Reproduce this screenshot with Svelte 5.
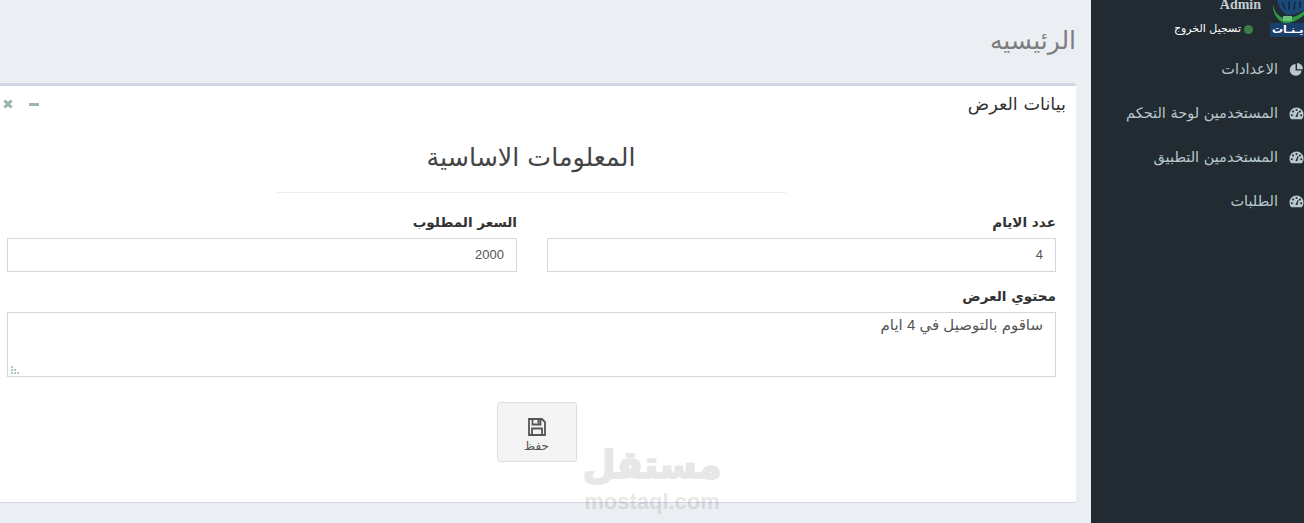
<script>
	const menu = [
		{ label: 'الاعدادات', icon: 'pie' },
		{ label: 'المستخدمين لوحة التحكم', icon: 'gauge' },
		{ label: 'المستخدمين التطبيق', icon: 'gauge' },
		{ label: 'الطلبات', icon: 'gauge' }
	];
</script>

<div class="wrapper" dir="rtl">
	<aside class="sidebar">
		<div class="profile">
			<div class="logo">
				<svg class="emblem" viewBox="0 0 34 24" width="34" height="24">
					<path d="M7 0H34V10C28 14 22 15 17 15 12 13 9 7 7 0z" fill="#1c4a78" />
					<path d="M12 2l3 7M19 1v9M25 2l-1 8M30 1v7" stroke="#13263a" stroke-width="1.500" />
					<path d="M3 4C4 12 9 17 14 18 20 19 28 16 34 11V15C28 20 21 24 14 23 8 21 2 13 3 4z" fill="#2f9a45" />
					<path d="M13 16h9v5h-9z" fill="#6fbf7c" />
				</svg>
				<span class="logo-text">ديـنـات</span>
			</div>
			<div class="user">
				<strong class="name" dir="ltr">Admin</strong>
				<span class="logout"><i class="dot"></i>تسجيل الخروج</span>
			</div>
		</div>
		<nav class="menu">
			{#each menu as item}
				<a class="menu-item" href="#top">
					<svg viewBox="0 0 16 16" width="15" height="15">
						{#if item.icon === 'pie'}
							<path d="M7 2.200A6.300 6.300 0 1 0 13.400 9H7z" fill="#b8c7ce" />
							<path d="M8.500 1.200A6.300 6.300 0 0 1 14.900 7.600H8.500z" fill="#b8c7ce" />
						{:else}
							<path d="M8 1.500a7.500 7.500 0 0 0-7.500 7.500c0 2 .7 3.800 1.800 5.200h11.400c1.100-1.400 1.800-3.200 1.800-5.200A7.500 7.500 0 0 0 8 1.500z" fill="#b8c7ce" />
							<circle cx="8" cy="4.200" r="1.100" fill="#212b31" />
							<circle cx="4.300" cy="5.800" r="1.100" fill="#212b31" />
							<circle cx="11.700" cy="5.800" r="1.100" fill="#212b31" />
							<circle cx="3" cy="9.800" r="1.100" fill="#212b31" />
							<circle cx="13" cy="9.800" r="1.100" fill="#212b31" />
							<path d="M6.800 11.500l2.700-5.500.9.300-1.600 5.700z" fill="#212b31" />
						{/if}
					</svg>
					<span>{item.label}</span>
				</a>
			{/each}
		</nav>
	</aside>

	<main class="content">
		<h3 class="page-title">الرئيسيه</h3>
		<section class="panel">
			<header class="panel-head">
				<h4>بيانات العرض</h4>
				<div class="tools">
					<span class="tool-min"></span>
					<svg viewBox="0 0 10 10" width="10" height="10">
						<path d="M1.500 1.500l7 7M8.500 1.500l-7 7" stroke="#9db3b5" stroke-width="3" />
					</svg>
				</div>
			</header>
			<h2 class="form-title">المعلومات الاساسية</h2>
			<hr />
			<form class="form">
				<div class="row">
					<label class="field">
						<span>عدد الايام</span>
						<input type="text" value="4" />
					</label>
					<label class="field">
						<span>السعر المطلوب</span>
						<input type="text" value="2000" />
					</label>
				</div>
				<label class="field full">
					<span>محتوي العرض</span>
					<div class="area">
						<textarea>ساقوم بالتوصيل في 4 ايام</textarea>
						<svg class="grip" viewBox="0 0 8 8" width="8" height="8">
							<path d="M0 0h2v2H0zM0 3h2v2H0zM3 3h2v2H3zM0 6h2v2H0zM3 6h2v2H3zM6 6h2v2H6z" fill="#b4c6c8" />
						</svg>
					</div>
				</label>
				<div class="actions">
					<button type="button" class="save">
						<svg viewBox="0 0 18 18" width="18" height="18">
							<path d="M1 1h13l3 3v13H1z M4.500 1v5.500h8V1 M4 17v-6.500h10V17" fill="none" stroke="#555" stroke-width="1.800" />
							<path d="M9.500 2h2v3.500h-2z" fill="#555" />
						</svg>
						<span>حفظ</span>
					</button>
				</div>
			</form>
		</section>
	</main>

	<div class="watermark" dir="rtl">
		<span class="wm-ar">مستقل</span>
		<span class="wm-en" dir="ltr">mostaql.com</span>
	</div>
</div>

<style>
	:global(body) {
		margin: 0;
		background: #ebeff3;
	}

	.wrapper {
		display: flex;
		position: relative;
		height: 523px;
		overflow: hidden;
		font-family: 'DejaVu Sans', sans-serif;
		background: #ebeff3;
	}

	.sidebar {
		flex: 0 0 213px;
		background: #212b31;
		color: #b8c7ce;
	}

	.profile {
		display: flex;
		align-items: flex-start;
		height: 50px;
		margin-top: -3px;
	}

	.logo {
		position: relative;
		width: 34px;
		height: 41px;
		overflow: hidden;
		flex: none;
		direction: ltr;
		margin-top: 3px;
	}

	.emblem {
		display: block;
	}

	.logo-text {
		position: absolute;
		left: 0;
		top: 23px;
		height: 14px;
		padding: 0 4px 0 2px;
		background: #1a3f6b;
		color: #fff;
		font-size: 11px;
		font-weight: bold;
		line-height: 14px;
		white-space: nowrap;
		direction: rtl;
	}

	.user {
		display: flex;
		flex-direction: column;
		align-items: flex-start;
		margin-right: 17px;
	}

	.name {
		margin-right: -8px;
		font-family: 'Liberation Serif', serif;
		font-size: 14px;
		line-height: 15px;
		color: #c2ced4;
	}

	.logout {
		display: flex;
		align-items: center;
		gap: 3px;
		margin-top: 9px;
		font-size: 11px;
		line-height: 16px;
		color: #fff;
	}

	.dot {
		width: 9px;
		height: 9px;
		border-radius: 50%;
		background: #3c7f45;
	}

	.menu {
		display: flex;
		flex-direction: column;
	}

	.menu-item {
		display: flex;
		align-items: center;
		gap: 11px;
		height: 44px;
		font-size: 14.5px;
		color: #b8c7ce;
		text-decoration: none;
	}

	.content {
		flex: 1;
		min-width: 0;
		padding-right: 15px;
		margin-left: -14px;
	}

	.page-title {
		margin: 0;
		padding-top: 27px;
		height: 83px;
		box-sizing: border-box;
		font-size: 25px;
		line-height: 28px;
		font-weight: normal;
		color: #7d7d7d;
	}

	.panel {
		height: 420px;
		box-sizing: border-box;
		background: #fff;
		border-top: 3px solid #d2d6de;
		border-bottom: 1px solid #d2d6de;
		border-radius: 3px;
	}

	.panel-head {
		display: flex;
		justify-content: space-between;
		padding: 6px 10px 0 17px;
		height: 30px;
	}

	.panel-head h4 {
		margin: 0;
		font-size: 17.7px;
		line-height: 24px;
		font-weight: normal;
		color: #333;
	}

	.tools {
		display: flex;
		align-items: center;
		gap: 16px;
		height: 20px;
		margin-top: 2px;
	}

	.tool-min {
		width: 10px;
		height: 3px;
		background: #9db3b5;
	}

	.form-title {
		margin: 0;
		padding-top: 16px;
		height: 40px;
		font-size: 25.3px;
		line-height: 40px;
		font-weight: normal;
		text-align: center;
		color: #444;
	}

	hr {
		width: 509px;
		margin: 14px auto 0;
		border: 0;
		border-top: 1px solid #eee;
	}

	.form {
		padding: 19px 20px 0 21px;
	}

	.row {
		display: grid;
		grid-template-columns: 509px 510px;
		gap: 30px;
	}

	.field {
		display: block;
	}

	.field span {
		display: block;
		margin-bottom: 6px;
		font-size: 13.6px;
		line-height: 20px;
		font-weight: bold;
		color: #333;
	}

	input,
	textarea {
		display: block;
		width: 100%;
		box-sizing: border-box;
		font-family: 'Liberation Sans', 'DejaVu Sans', sans-serif;
		color: #555;
		background: #fff;
		border: 1px solid #d2d6de;
		border-radius: 0;
		outline: none;
	}

	input {
		height: 34px;
		padding: 5px 12px 7px;
		font-size: 13px;
	}

	.full {
		margin-top: 14px;
	}

	.area {
		position: relative;
	}

	textarea {
		height: 65px;
		padding: 2px 12px;
		font-size: 15px;
		line-height: 20px;
		resize: none;
	}

	.grip {
		position: absolute;
		left: 4px;
		bottom: 3px;
	}

	.actions {
		display: flex;
		justify-content: center;
		margin-top: 25px;
	}

	.save {
		display: flex;
		flex-direction: column;
		align-items: center;
		gap: 1px;
		width: 80px;
		height: 60px;
		padding: 15px 0 0;
		box-sizing: border-box;
		background: #f4f4f4;
		border: 1px solid #ddd;
		border-radius: 3px;
		font-family: 'DejaVu Sans', sans-serif;
		font-size: 12px;
		line-height: 18px;
		color: #555;
		transform: translateX(5px);
	}

	.watermark {
		position: absolute;
		left: 584px;
		top: 438px;
		width: 136px;
		display: flex;
		flex-direction: column;
		align-items: center;
		color: #000;
		opacity: 0.09;
		pointer-events: none;
	}

	.wm-ar {
		font-size: 38px;
		line-height: 54px;
		font-weight: bold;
		white-space: nowrap;
		-webkit-text-stroke: 2px #000;
	}

	.wm-en {
		font-family: 'Liberation Sans', sans-serif;
		font-size: 22px;
		line-height: 20px;
		font-weight: bold;
	}
</style>
